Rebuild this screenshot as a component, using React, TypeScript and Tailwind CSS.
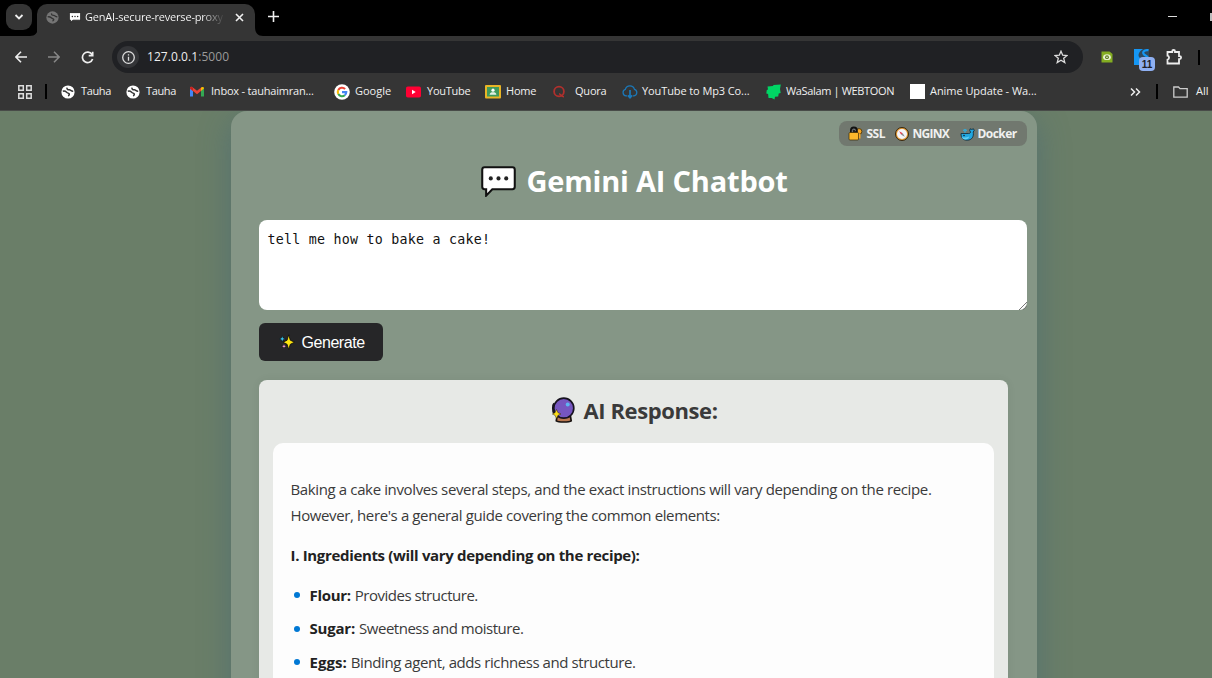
import type { ReactNode } from "react";

const Globe = ({ color, size = 14 }: { color: string; size?: number }) => (
  <svg width={size} height={size} viewBox="0 0 14 14" className="shrink-0">
    <circle cx="7" cy="7" r="6.6" fill={color} />
    <path d="M1.800 6.300C3.400 5.800 4.600 6.300 5.600 7.300S7.300 8 8 8.600 8.300 10.500 7 10.800M6 2.600C5.600 4.300 7 4.900 8.300 4.700S10 6.400 12.200 6.200" fill="none" stroke="#353535" strokeWidth="1.500" />
  </svg>
);

const Gmail = () => (
  <svg width="14" height="14" viewBox="0 0 14 14">
    <path d="M0 3v8.500h3V5.500z" fill="#4285f4" />
    <path d="M14 3v8.500h-3V5.500z" fill="#34a853" />
    <path d="M0 3.200C0 1.700 1.600 1.500 2.500 2.200L7 5.800l4.500-3.600L11 6 7 9.200 3 6 0 4z" fill="#ea4335" />
    <path d="M11 2.600c1.200-1 3-.6 3 .8L11 6z" fill="#fbbc04" />
    <path d="M0 3.400 3 6V2.600C1.500 1.600 0 2 0 3.400z" fill="#c5221f" />
  </svg>
);

const Google = () => (
  <svg width="16" height="16" viewBox="0 0 16 16">
    <circle cx="8" cy="8" r="7.800" fill="#fff" />
    <g fill="none" strokeWidth="2.100">
      <path d="M4.300 5.900A4.300 4.300 0 0 1 11.100 5" stroke="#ea4335" />
      <path d="M4.300 10.100A4.300 4.300 0 0 1 4.300 5.900" stroke="#fbbc05" />
      <path d="M10.800 11.300A4.300 4.300 0 0 1 4.300 10.100" stroke="#34a853" />
      <path d="M8 8.100h4.300A4.300 4.300 0 0 1 10.800 11.300" stroke="#4285f4" />
    </g>
  </svg>
);

const YouTube = () => (
  <svg width="15" height="12" viewBox="0 0 15 12">
    <rect y=".5" width="15" height="11" rx="1.800" fill="#ff0033" />
    <path d="M6 3.800v4.400L9.700 6z" fill="#fff" />
  </svg>
);

const Classroom = () => (
  <svg width="16" height="14" viewBox="0 0 16 14">
    <rect width="16" height="13.500" rx="1" fill="#e9b526" />
    <rect x="2" y="2" width="12" height="9.500" fill="#3f9a5c" />
    <circle cx="8" cy="5.200" r="1.600" fill="#fff" />
    <path d="M4.600 9.800c.2-2 1.500-2.500 3.400-2.500s3.200.5 3.400 2.500z" fill="#dff0e4" />
  </svg>
);

const Quora = () => (
  <svg width="13" height="14" viewBox="0 0 13 14">
    <circle cx="6" cy="6.500" r="4.900" fill="none" stroke="#b0302d" strokeWidth="1.800" />
    <path d="M6 8.800c1.800 0 2.200 3.200 5 3" fill="none" stroke="#b0302d" strokeWidth="1.500" />
  </svg>
);

const CloudDown = () => (
  <svg width="16" height="14" viewBox="0 0 16 14" fill="none" stroke="#1b78b8" strokeWidth="1.300">
    <path d="M5 10.800H4A3.300 3.300 0 0 1 3.300 4.400 4.800 4.800 0 0 1 12.500 4.400 3.300 3.300 0 0 1 12 10.800H11" />
    <path d="M8 5v7.500M5.800 10.400 8 12.700l2.200-2.300" strokeWidth="1.700" />
  </svg>
);

const Webtoon = () => (
  <svg width="16" height="16" viewBox="0 0 16 16">
    <path d="M1.500 2.500 7 2 7.500 1 14.800.6 14 5l.7 4-2 .5-.5 3-3.200.2-.5 2.800-2.800-1.600-3.200.1-.4-4-1.800-.5.5-3.500 1.200-.5z" fill="#00d564" />
  </svg>
);

type Bookmark = { icon: ReactNode; label: string; slot: string; icn: string; track: string };

const bookmarks: Bookmark[] = [
  { icon: <Globe color="#fff" />, label: "Tauha", slot: "w-[65px]", icn: "w-[20px]", track: "tracking-[-0.35px]" },
  { icon: <Globe color="#fff" />, label: "Tauha", slot: "w-[64px]", icn: "w-[20px]", track: "tracking-[-0.35px]" },
  { icon: <Gmail />, label: "Inbox - tauhaimran...", slot: "w-[144px]", icn: "w-[21px]", track: "tracking-[-0.2px]" },
  { icon: <Google />, label: "Google", slot: "w-[72px]", icn: "w-[21px]", track: "tracking-[0px]" },
  { icon: <YouTube />, label: "YouTube", slot: "w-[79px]", icn: "w-[21px]", track: "tracking-[-0.25px]" },
  { icon: <Classroom />, label: "Home", slot: "w-[68px]", icn: "w-[21px]", track: "tracking-[-0.2px]" },
  { icon: <Quora />, label: "Quora", slot: "w-[69px]", icn: "w-[22px]", track: "tracking-[-0.2px]" },
  { icon: <CloudDown />, label: "YouTube to Mp3 Co...", slot: "w-[144px]", icn: "w-[20px]", track: "tracking-[-0.1px]" },
  { icon: <Webtoon />, label: "WaSalam | WEBTOON", slot: "w-[144px]", icn: "w-[20px]", track: "tracking-[-0.35px]" },
  { icon: <span className="block h-[15px] w-[15px] bg-white" />, label: "Anime Update - Wa...", slot: "w-[219px]", icn: "w-[20px]", track: "tracking-[-0.05px]" },
];

const Bubble = ({ className }: { className: string }) => (
  <svg viewBox="0 0 34 30" className={className}>
    <path d="M3.500 1.200h27a2.300 2.300 0 0 1 2.300 2.300v16.700a2.300 2.300 0 0 1-2.300 2.300H11l-6 6.200v-6.200H3.500a2.300 2.300 0 0 1-2.300-2.300V3.500a2.300 2.300 0 0 1 2.300-2.300z" fill="#fff" stroke="#111" strokeWidth="2" />
    <g fill="#222">
      <circle cx="9.500" cy="12" r="2" />
      <circle cx="17" cy="12" r="2" />
      <circle cx="24.500" cy="12" r="2" />
    </g>
  </svg>
);

const Lock = () => (
  <svg width="15" height="15" viewBox="0 0 15 15" className="shrink-0">
    <circle cx="11" cy="5.500" r="2.900" fill="#f9a825" stroke="#3a2a05" strokeWidth=".8" />
    <path d="M9.500 8h3v4.500h-3z" fill="#f9a825" />
    <path d="M2.800 7V4.500a3 3 0 0 1 6.200 0V7z" fill="#222" stroke="#111" strokeWidth="1.600" />
    <path d="M4.300 6.500V4.700a1.600 1.600 0 0 1 3.200 0" fill="none" stroke="#8a8f92" strokeWidth=".9" />
    <rect x="1" y="6.500" width="9.500" height="7.500" rx="1" fill="#fbb72c" stroke="#3a2a05" strokeWidth=".7" />
  </svg>
);

const Compass = () => (
  <svg width="14" height="14" viewBox="0 0 14 14" className="shrink-0">
    <circle cx="7" cy="7" r="6.500" fill="#e9a13b" stroke="#2a1a05" strokeWidth=".9" />
    <circle cx="7" cy="7" r="5" fill="#f4f4fa" />
    <path d="M4.200 4.200 7.800 6.200 6.200 7.800z" fill="#e23b4b" />
    <path d="M9.800 9.800 7.800 6.200 6.200 7.800z" fill="#888" />
  </svg>
);

const Whale = () => (
  <svg width="15" height="14" viewBox="0 0 15 14" className="shrink-0">
    <path d="M1 6.500h7.500c1.200 0 2.200-.6 2-1.500L9.700 3.600l.4-1.800 1.700.6 1.700-.6.7 1.600-1 1.600c.9 4.500-1.300 8.200-6 8.200C3 13.200 1 11 1 6.500z" fill="#22a7e0" stroke="#0b2433" strokeWidth=".8" />
    <path d="M1.700 10c2 .8 5 .8 7.500-.5-.6 2.300-2 3-4 3s-3-1-3.500-2.500z" fill="#5fd0f5" />
    <circle cx="4" cy="8.500" r=".8" fill="#0b2433" />
    <path d="M5 5.800V3.400M3.200 3.600 5 2.600l1.800 1" fill="none" stroke="#2bb3e8" strokeWidth="1.200" />
  </svg>
);

const Sparkles = () => (
  <svg width="16" height="16" viewBox="0 0 16 16" className="shrink-0">
    <path d="M9.700.8 11.300 6.200l4.200 2-4.200 2.100-1.600 5.200-1.600-5.200-4-2.100 4-2z" fill="#fde411" stroke="#0c0c0c" strokeWidth=".8" />
    <path d="M3.300 1.800 4.200 4l2.200.9-2.200.9-.9 2.200-.9-2.200L.4 4.900 2.400 4z" fill="#37bfe8" stroke="#0c0c0c" strokeWidth=".5" />
    <path d="M5 9.600l.7 1.900 1.900.8-1.900.8L5 15l-.7-1.900-1.900-.8 1.900-.8z" fill="#f19bd5" stroke="#0c0c0c" strokeWidth=".5" />
  </svg>
);

const CrystalBall = () => (
  <svg width="25" height="26" viewBox="0 0 25 26" className="shrink-0">
    <path d="M6 19.500h13.500l.7 4.300c-2 1.600-12.900 1.600-14.900 0z" fill="#b97850" stroke="#17110f" strokeWidth="1.700" />
    <circle cx="12.800" cy="11.200" r="10" fill="#7656c0" stroke="#17131f" strokeWidth="1.700" />
    <path d="M3 6.500c-1.500 1.500-1.500 8 0 10" fill="none" stroke="#17131f" strokeWidth="1.800" />
    <circle cx="16.700" cy="7.500" r="2" fill="#5eb4f0" />
    <path d="M5.500 12.500 7 15.700l3 1.300-3 1.300-1.500 3.200L4 18.300 1.300 17 4 15.700z" fill="#fbdc1b" stroke="#2d230b" strokeWidth=".5" />
  </svg>
);

function TabStrip() {
  return (
    <div className="flex h-[36px] shrink-0 items-start bg-black">
      <div className="ml-[6px] mt-[4px] flex h-[26px] w-[26px] items-center justify-center rounded-[9px] bg-[#353535]">
        <svg width="10" height="6" viewBox="0 0 10 6" fill="none" stroke="#eee" strokeWidth="1.800"><path d="M1.500 1 5 4.500 8.500 1" /></svg>
      </div>
      <svg width="8" height="32" viewBox="0 0 8 32" className="-ml-0.5 mt-[4px]"><path d="M8 23v9H0c5 0 8-3 8-9z" fill="#353535" /></svg>
      <div className="-ml-px mt-[4px] flex h-[32px] w-[218px] items-center rounded-t-[10px] bg-[#353535] pb-[6px] pl-[9px]">
        <Globe color="#757575" size={13} />
        <Bubble className="ml-[10px] h-[11px] w-[12px]" />
        <div className="ml-[4px] w-[138px] overflow-hidden whitespace-nowrap bg-linear-to-r from-white from-85% to-[#454545] bg-clip-text text-[11px] tracking-[-0.2px] text-transparent">
          GenAI-secure-reverse-proxy
        </div>
        <svg width="9" height="9" viewBox="0 0 9 9" stroke="#f0f0f0" strokeWidth="1.600" className="ml-[12px]"><path d="m1 1 7 7M8 1 1 8" /></svg>
      </div>
      <svg width="8" height="32" viewBox="0 0 8 32" className="mt-[4px]"><path d="M0 23v9h8c-5 0-8-3-8-9z" fill="#353535" /></svg>
      <svg width="11" height="11" viewBox="0 0 11 11" stroke="#f0f0f0" strokeWidth="1.600" className="ml-[5px] mt-[11px]"><path d="M5.500 0v11M0 5.500h11" /></svg>
      <div className="ml-auto mt-[16px] h-px w-[9px] bg-[#ddd]" />
      <div className="ml-[33px] mt-[13px] h-[8px] w-[2px] bg-[#bbb]" />
    </div>
  );
}

function Toolbar() {
  return (
    <div className="flex h-[42px] shrink-0 items-center bg-[#353535]">
      <svg width="12" height="12" viewBox="0 0 12 12" fill="none" stroke="#eee" strokeWidth="1.600" className="ml-[15px]"><path d="M12 6H1M6 .8.9 6 6 11.200" /></svg>
      <svg width="12" height="12" viewBox="0 0 12 12" fill="none" stroke="#888" strokeWidth="1.500" className="ml-[21px]"><path d="M0 6h11M6 .8 11.100 6 6 11.200" /></svg>
      <svg width="13" height="13" viewBox="0 0 13 13" fill="none" stroke="#eee" strokeWidth="1.700" className="ml-[21px]"><path d="M11 3.500A5.200 5.200 0 1 0 11.600 8M11.700.7v4H7.700" /></svg>
      <div className="ml-[18px] flex h-[32px] w-[971px] items-center rounded-full bg-[#202124] pl-[5px] pr-[15px]">
        <div className="flex h-[22px] w-[22px] items-center justify-center rounded-full bg-[#343538]">
          <svg width="13" height="13" viewBox="0 0 13 13" fill="none" stroke="#ddd" strokeWidth="1.300"><circle cx="6.500" cy="6.500" r="5.800" /><path d="M6.500 5.800v4M6.500 3.200v1.400" /></svg>
        </div>
        <span className="ml-[8px] text-[12px] tracking-[0.06px] text-[#eee]">127.0.0.1<span className="text-[#9a9a9a]">:5000</span></span>
        <svg width="14" height="14" viewBox="0 0 14 14" fill="none" stroke="#ddd" strokeWidth="1.300" className="ml-auto"><path d="m7 1.200 1.700 4 4.400.3-3.400 2.800 1.100 4.300L7 10.300l-3.800 2.300 1.100-4.300L.9 5.500l4.400-.3z" /></svg>
      </div>
      <svg width="12" height="12" viewBox="0 0 12 12" className="ml-[18px]">
        <path d="M.5.5H8.500L11.500 3v8.500H.5z" fill="#84ad22" />
        <ellipse cx="6" cy="6.200" rx="3.900" ry="2.900" fill="#e8f0cf" /><circle cx="6" cy="6.200" r="1.900" fill="#57791a" /><circle cx="6" cy="6.200" r=".8" fill="#fff" />
      </svg>
      <div className="relative ml-[21px] h-[16px] w-[15px] bg-[#1597f5]">
        <svg width="15" height="16" viewBox="0 0 15 16"><path d="M15 0v16H5c4-3 4-5 1-7S5 2 9 0z" fill="#2d4a62" /><path d="M14.500 1.200c-4-.6-7 2-4.200 4.600 2 1.200 4 2 4 4" fill="none" stroke="#1597f5" strokeWidth="2.200" /></svg>
        <span className="absolute left-[5px] top-[8px] flex h-[14px] w-[16px] items-center justify-center rounded-[4px] bg-[#8fb0f2] font-['Liberation_Sans'] text-[10px] font-bold text-[#202124]">11</span>
      </div>
      <svg width="17" height="17" viewBox="0 0 17 17" fill="none" stroke="#eee" strokeWidth="1.800" className="ml-[17px]"><path d="M1.500 3h4.700v-.6a1.400 1.400 0 0 1 2.800 0V3H13v4.100h.6a1.500 1.500 0 0 1 0 3H13v4.400H1.500v-3.900a2 2 0 0 0 0-3.900z" /></svg>
      <div className="ml-[15px] h-[15px] w-[2px] bg-black" />
    </div>
  );
}

function BookmarksBar() {
  return (
    <div className="flex h-[33px] shrink-0 items-center overflow-hidden whitespace-nowrap border-b border-[#484b48] bg-[#353535] pb-[5px] text-[11px] text-[#f0f0f0]">
      <svg width="14" height="14" viewBox="0 0 14 14" fill="none" stroke="#ddd" strokeWidth="1.500" className="ml-[18px] shrink-0"><path d="M.8.8h4.500v4.500H.8zM8.700.8h4.500v4.500H8.700zM.8 8.700h4.500v4.500H.8zM8.700 8.700h4.500v4.500H8.700z" /></svg>
      <div className="ml-[13px] h-[15px] w-[2px] shrink-0 bg-black" />
      <div className="ml-[14px] flex shrink-0">
        {bookmarks.map((b, i) => (
          <div key={i} className={`flex shrink-0 items-center ${b.slot}`}>
            <span className={`shrink-0 ${b.icn}`}>{b.icon}</span>
            <span className={b.track}>{b.label}</span>
          </div>
        ))}
      </div>
      <svg width="11" height="8" viewBox="0 0 11 8" fill="none" stroke="#eee" strokeWidth="1.500" className="ml-px shrink-0"><path d="m1 .5 3.500 3.500L1 7.500M6 .5 9.500 4 6 7.500" /></svg>
      <div className="ml-[15px] h-[15px] w-[2px] shrink-0 bg-black" />
      <svg width="15" height="12" viewBox="0 0 15 12" fill="none" stroke="#ccc" strokeWidth="1.300" className="ml-[15px] shrink-0"><path d="M.8 11.200V1h4.700l1.500 1.600h7.200v8.600z" /></svg>
      <span className="ml-[8px]">All</span>
    </div>
  );
}

const ingredients = [
  { name: "Flour:", text: "Provides structure.", nt: "tracking-[-0.3px]", tt: "tracking-[-0.48px]" },
  { name: "Sugar:", text: "Sweetness and moisture.", nt: "tracking-[-0.2px]", tt: "tracking-[-0.48px]" },
  { name: "Eggs:", text: "Binding agent, adds richness and structure.", nt: "tracking-[0.05px]", tt: "tracking-[-0.42px]" },
];

export default function App() {
  return (
    <div className="flex h-[678px] w-[1212px] flex-col overflow-hidden font-['Open_Sans',sans-serif]">
      <TabStrip />
      <Toolbar />
      <BookmarksBar />
      <div className="flex min-h-0 flex-1 overflow-hidden bg-[#6a7e68] pl-[230.5px]">
        <div className="h-[700px] w-[806px] shrink-0 rounded-[16px] bg-[#859686] pl-[28px] pr-[10px] pt-[10px] shadow-[0_8px_32px_rgba(50,95,130,0.38)]">
          <div className="ml-auto flex h-[25px] w-[188px] items-center rounded-[8px] bg-[#71786f] pl-[9px] text-[12px] font-bold text-[#f0f1f0]">
            <Lock /><span className="ml-[4px] w-[28px] tracking-[-0.5px]">SSL</span>
            <Compass /><span className="ml-[4px] w-[47px] tracking-[-0.7px]">NGINX</span>
            <Whale /><span className="ml-[3px] tracking-[-0.55px]">Docker</span>
          </div>
          <h1 className="mt-[14px] flex h-[42px] items-center pl-[222px] text-[29px] font-bold text-white">
            <Bubble className="mr-[11px] mt-px h-[31px] w-[35px]" />
            <span className="whitespace-nowrap tracking-[-0.2px]">Gemini AI Chatbot</span>
          </h1>
          <div className="relative mt-[18px] h-[90px] w-[768px] rounded-[8px] bg-white pl-[9px] pt-[10px] font-['DejaVu_Sans_Mono',monospace] text-[13.3px] leading-[20px] tracking-[0.24px] text-[#111]">
            tell me how to bake a cake!
            <svg width="8" height="8" viewBox="0 0 8 8" stroke="#777" className="absolute bottom-0 right-0"><path d="M0 8 8 0M4 8 8 4" /></svg>
          </div>
          <div className="mt-[13px] flex h-[38px] w-[124px] items-center rounded-[6px] bg-[#262628] pl-[20px] font-['Liberation_Sans',sans-serif] text-[16px] tracking-[-0.45px] text-white">
            <Sparkles /><span className="ml-[7px] mt-[2px]">Generate</span>
          </div>
          <div className="mt-[19px] h-[340px] w-[749px] rounded-[8px] bg-[#e7e9e6] px-[14px] shadow-[0_0_10px_rgba(0,0,0,0.06)]">
            <h2 className="flex h-[63px] items-center pb-[3px] pl-[278px] text-[22px] font-bold text-[#3a3a3a]">
              <CrystalBall /><span className="ml-[8px] whitespace-nowrap tracking-[-0.4px]">AI Response:</span>
            </h2>
            <div className="h-[300px] w-[721px] whitespace-nowrap rounded-[10px] bg-[#fdfdfd] px-[18px] pt-[34px] text-[15px] leading-[25.500px] text-[#3a3a3a]">
              <p className="tracking-[-0.37px]">Baking a cake involves several steps, and the exact instructions will vary depending on the recipe.</p>
              <p className="tracking-[-0.38px]">However, here's a general guide covering the common elements:</p>
              <p className="mt-[15px] font-bold tracking-[-0.33px] text-[#222]">I. Ingredients (will vary depending on the recipe):</p>
              <ul className="mt-[14px] flex flex-col gap-[8px]">
                {ingredients.map((it) => (
                  <li key={it.name} className="flex items-center">
                    <span className="ml-[3px] mr-[10px] h-[6px] w-[6px] rounded-full bg-[#0078d4]" />
                    <span className={`mr-[4px] font-bold text-[#222] ${it.nt}`}>{it.name}</span>
                    <span className={it.tt}>{it.text}</span>
                  </li>
                ))}
              </ul>
            </div>
          </div>
        </div>
      </div>
    </div>
  );
}
